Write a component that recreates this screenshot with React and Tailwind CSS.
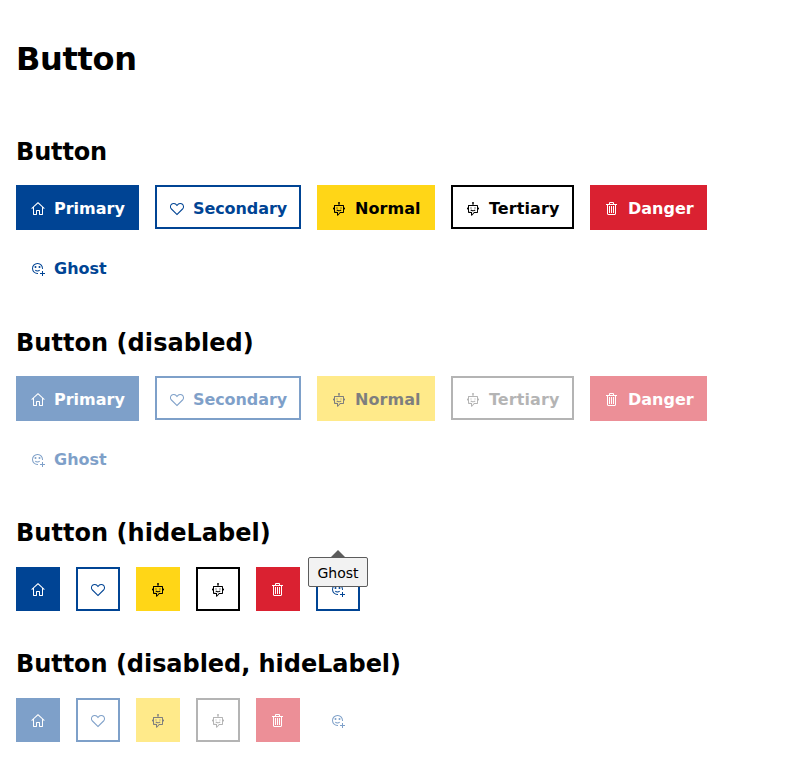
import React from "react";
import { VscHome, VscHeart, VscHubot, VscTrash, VscReactions } from "react-icons/vsc";

const kinds = [
  { label: "Primary", Icon: VscHome, box: "bg-[#004494] border-[#004494] text-white", w: "w-[123px] h-[45px] pt-0.5", fade: "opacity-50" },
  { label: "Secondary", Icon: VscHeart, box: "bg-white border-[#004494] text-[#004494]", w: "w-[146px] h-11 pt-[3px] tracking-[-0.08px]", fade: "opacity-50" },
  { label: "Normal", Icon: VscHubot, box: "bg-[#ffd617] border-[#ffd617] text-black", w: "w-[118px] h-[45px] pt-0.5 tracking-[0.05px]", fade: "opacity-50" },
  { label: "Tertiary", Icon: VscHubot, box: "bg-white border-black text-black", w: "w-[123px] h-11 pt-[3px] tracking-[0.08px]", fade: "opacity-[0.29]" },
  { label: "Danger", Icon: VscTrash, box: "bg-[#da2131] border-[#da2131] text-white", w: "w-[117px] h-[45px] pt-0.5", fade: "opacity-50" },
  { label: "Ghost", Icon: VscReactions, box: "border-transparent text-[#004494]", w: "w-[104px] h-11 pt-0.5", fade: "opacity-50" },
];

function Button({ kind, disabled }) {
  const { Icon, label, box, w, fade } = kind;
  return (
    <button
      disabled={disabled}
      className={`flex items-center gap-2 border-2 pl-3 text-base font-bold whitespace-nowrap ${w} ${box} ${disabled ? fade : ""}`}
    >
      <Icon className="size-4 shrink-0" />
      <span>{label}</span>
    </button>
  );
}

function IconButton({ kind, disabled, tooltip }) {
  const { Icon, label, box, fade } = kind;
  return (
    <div className="relative">
      <button
        aria-label={label}
        disabled={disabled}
        className={`flex size-11 items-center justify-center border-2 pt-0.5 ${tooltip ? "border-[#004494] text-[#004494]" : box} ${disabled ? fade : ""}`}
      >
        <Icon className="size-4" />
      </button>
      {tooltip && (
        <div className="absolute -top-[10px] -left-2 flex h-[30px] w-[60px] items-center justify-center rounded-[2px] border border-[#5c5c5c] bg-[#f2f2f2] pt-0.5 text-sm text-black">
          <svg className="absolute -top-[8px] left-[22px]" width="14" height="7" viewBox="0 0 14 7">
            <path d="M0 7 7 0l7 7Z" fill="#5c5c5c" />
          </svg>
          {label}
        </div>
      )}
    </div>
  );
}

function Section({ title, children, className, heading = "leading-9" }) {
  return (
    <section className={className}>
      <h2 className={`mb-4 h-9 text-2xl font-bold ${heading}`}>{title}</h2>
      {children}
    </section>
  );
}

function ButtonRow({ disabled }) {
  return (
    <div className="flex h-[105px] flex-wrap content-start gap-x-4 gap-y-4">
      {kinds.map((k) => (
        <Button key={k.label} kind={k} disabled={disabled} />
      ))}
    </div>
  );
}

export default function App() {
  return (
    <main className="h-[758px] w-[800px] overflow-hidden bg-white px-4 pt-9 font-['Verdana','DejaVu_Sans',sans-serif] text-black">
      <h1 className="mb-[52px] h-[45px] text-[32px] leading-[47px] font-bold tracking-[-0.3px]">Button</h1>
      <Section title="Button" className="h-[191px]" heading="leading-[38px] tracking-[-0.15px]">
        <ButtonRow />
      </Section>
      <Section title="Button (disabled)" className="h-[191px]" heading="leading-[38px] tracking-[0.05px]">
        <ButtonRow disabled />
      </Section>
      <Section title="Button (hideLabel)" className="h-[131px]" heading="leading-9 tracking-[0.04px]">
        <div className="flex gap-4">
          {kinds.map((k) => (
            <IconButton key={k.label} kind={k} tooltip={k.label === "Ghost"} />
          ))}
        </div>
      </Section>
      <Section title="Button (disabled, hideLabel)" heading="leading-9 tracking-[-0.05px]">
        <div className="flex gap-4">
          {kinds.map((k) => (
            <IconButton key={k.label} kind={k} disabled />
          ))}
        </div>
      </Section>
    </main>
  );
}
